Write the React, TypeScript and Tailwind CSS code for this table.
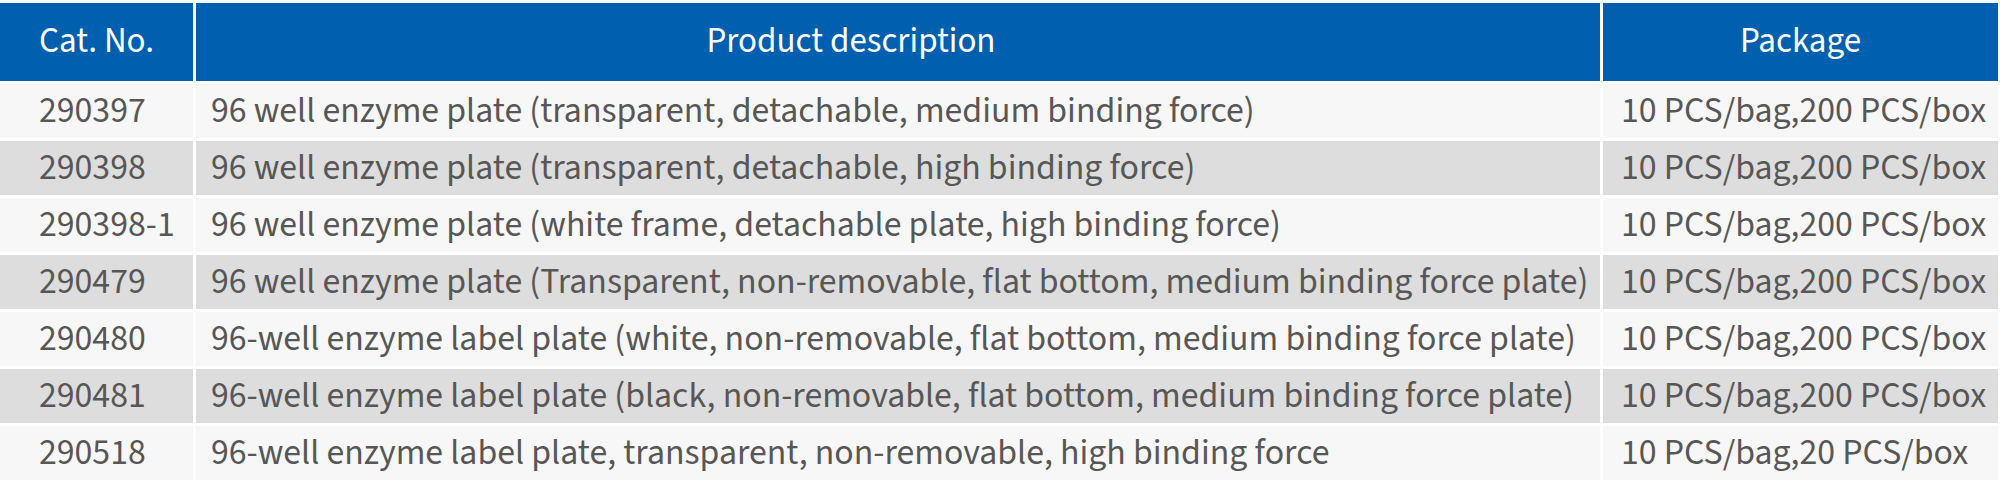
import React from "react";

const rows = [
  ["290397", "96 well enzyme plate (transparent, detachable, medium binding force)", "10 PCS/bag,200 PCS/box"],
  ["290398", "96 well enzyme plate (transparent, detachable, high binding force)", "10 PCS/bag,200 PCS/box"],
  ["290398-1", "96 well enzyme plate (white frame, detachable plate, high binding force)", "10 PCS/bag,200 PCS/box"],
  ["290479", "96 well enzyme plate (Transparent, non-removable, flat bottom, medium binding force plate)", "10 PCS/bag,200 PCS/box"],
  ["290480", "96-well enzyme label plate (white, non-removable, flat bottom, medium binding force plate)", "10 PCS/bag,200 PCS/box"],
  ["290481", "96-well enzyme label plate (black, non-removable, flat bottom, medium binding force plate)", "10 PCS/bag,200 PCS/box"],
  ["290518", "96-well enzyme label plate, transparent, non-removable, high binding force", "10 PCS/bag,20 PCS/box"],
];

export default function App() {
  return (
    <div
      className="w-[2000px] h-[481px] bg-white pt-[3px] overflow-hidden"
      style={{ fontFamily: '"Source Sans Pro", "Source Sans 3", Lato, "Noto Sans", sans-serif' }}
    >
      <div className="grid grid-cols-[193px_1404px_395px] gap-x-[3px] gap-y-[3px] leading-none">
        <div className="h-[78px] bg-[#005fae] text-white text-[35px] flex items-center pl-[39px] pb-[2px]">Cat. No.</div>
        <div className="h-[78px] bg-[#005fae] text-white text-[35px] flex items-center justify-center pr-[94px] pb-[2px]">Product description</div>
        <div className="h-[78px] bg-[#005fae] text-white text-[35px] flex items-center justify-center pb-[2px]">Package</div>
        {rows.map((r, i) => {
          const bg = i % 2 === 0 ? "bg-[#f7f7f7]" : "bg-[#dcdddc]";
          return (
            <React.Fragment key={r[0]}>
              <div className={`h-[54px] ${bg} text-[#575757] text-[35.8px] flex items-center pl-[39px]`}>{r[0]}</div>
              <div className={`h-[54px] ${bg} text-[#575757] text-[35.8px] flex items-center pl-[15px] whitespace-nowrap`}>{r[1]}</div>
              <div className={`h-[54px] ${bg} text-[#575757] text-[35.8px] flex items-center pl-[18px] whitespace-nowrap`}>{r[2]}</div>
            </React.Fragment>
          );
        })}
      </div>
    </div>
  );
}
